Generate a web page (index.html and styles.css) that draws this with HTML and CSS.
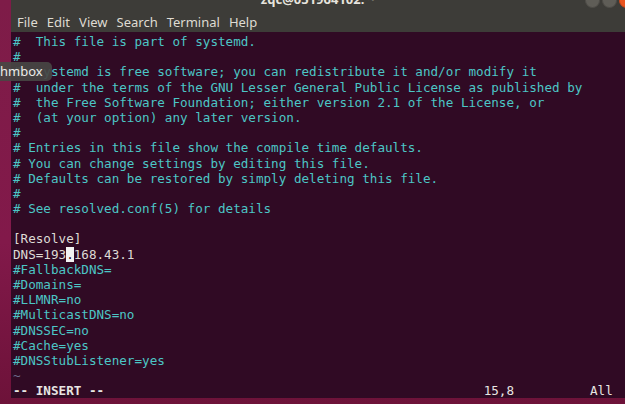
FILE: index.html
```html
<!DOCTYPE html>
<html lang="en">
<head>
  <meta charset="UTF-8" />
  <title>resolved.conf - vim</title>
  <link rel="stylesheet" href="styles.css">
</head>
<body>
  <div class="desk-edge"></div>

  <div class="window">
    <div class="titlebar">
      <span></span>
      <span class="title">zqc@051964102: ~</span>
      <div class="win-buttons">
        <span class="win-btn"></span>
        <span class="win-btn"></span>
        <span class="win-btn close"></span>
      </div>
    </div>

    <div class="menubar">
      <span>File</span>
      <span>Edit</span>
      <span>View</span>
      <span>Search</span>
      <span>Terminal</span>
      <span>Help</span>
    </div>

    <!-- vim buffer -->
    <div class="term">
      <div class="line comment">#  This file is part of systemd.</div>
      <div class="line comment">#</div>
      <div class="line comment">#  systemd is free software; you can redistribute it and/or modify it</div>
      <div class="line comment">#  under the terms of the GNU Lesser General Public License as published by</div>
      <div class="line comment">#  the Free Software Foundation; either version 2.1 of the License, or</div>
      <div class="line comment">#  (at your option) any later version.</div>
      <div class="line comment">#</div>
      <div class="line comment"># Entries in this file show the compile time defaults.</div>
      <div class="line comment"># You can change settings by editing this file.</div>
      <div class="line comment"># Defaults can be restored by simply deleting this file.</div>
      <div class="line comment">#</div>
      <div class="line comment"># See resolved.conf(5) for details</div>
      <div class="line"> </div>
      <div class="line">[Resolve]</div>
      <div class="line">DNS=193<span class="cursor">.</span>168.43.1</div>
      <div class="line comment">#FallbackDNS=</div>
      <div class="line comment">#Domains=</div>
      <div class="line comment">#LLMNR=no</div>
      <div class="line comment">#MulticastDNS=no</div>
      <div class="line comment">#DNSSEC=no</div>
      <div class="line comment">#Cache=yes</div>
      <div class="line comment">#DNSStubListener=yes</div>
      <div class="line tilde">~</div>
      <div class="line status"><b>-- INSERT --</b>                                                  15,8          All</div>
    </div>
  </div>

  <div class="tooltip">hmbox</div>
</body>
</html>
```

FILE: styles.css
```css
html, body {
  margin: 0;
  padding: 0;
  width: 625px;
  height: 404px;
  overflow: hidden;
}

body {
  display: flex;
  align-items: flex-start;
  background: linear-gradient(180deg, #7e1c48 0%, #82194a 60%, #6d1239 100%);
  font-family: 'Noto Sans', 'DejaVu Sans', sans-serif;
}

.desk-edge {
  width: 11px;
  flex-shrink: 0;
}

.window {
  flex: 1;
  height: 398px;
  display: flex;
  flex-direction: column;
  overflow: hidden;
}

.titlebar {
  flex-shrink: 0;
  height: 12px;
  background-color: #3d3c38;
  display: grid;
  grid-template-columns: 1fr auto 1fr;
  overflow: hidden;
}

.title {
  color: #e6e3dd;
  font-size: 13px;
  font-weight: bold;
  line-height: 13px;
  margin-top: -7px;
}

.win-buttons {
  display: flex;
  justify-content: flex-end;
  align-items: flex-start;
  gap: 2px;
  margin-top: -7px;
  margin-right: -9px;
}

.win-btn {
  width: 13px;
  height: 13px;
  border-radius: 50%;
  background-color: #5f5d57;
  border: 1px solid #4f4d48;
}

.win-btn.close {
  background-color: #e9541f;
  border-color: #c9461a;
}

.menubar {
  flex-shrink: 0;
  height: 20px;
  background-color: #3d3c38;
  display: flex;
  align-items: center;
  gap: 9px;
  padding-left: 6px;
  color: #dfdbd2;
  font-size: 13px;
}

.term {
  flex: 1;
  background-color: #300a24;
  padding: 2px 0 0 2px;
  font-family: 'DejaVu Sans Mono', monospace;
  font-size: 12.62px;
  line-height: 15.2px;
  color: #dedad5;
}

.line {
  height: 15.2px;
  white-space: pre;
}

.comment {
  color: #4cc6c6;
}

.cursor {
  background-color: #f2f2f2;
  color: #300a24;
}

.tilde {
  color: #6d6a8a;
}

.status {
  color: #e8e6e3;
}

.status b {
  font-weight: bold;
}

.tooltip {
  position: absolute;
  left: -6px;
  top: 62px;
  padding: 1px 9px 2px 6px;
  border-radius: 5px;
  background-color: rgba(72, 70, 68, 0.92);
  color: #ecebe8;
  font-size: 13px;
  line-height: 16px;
}
```
